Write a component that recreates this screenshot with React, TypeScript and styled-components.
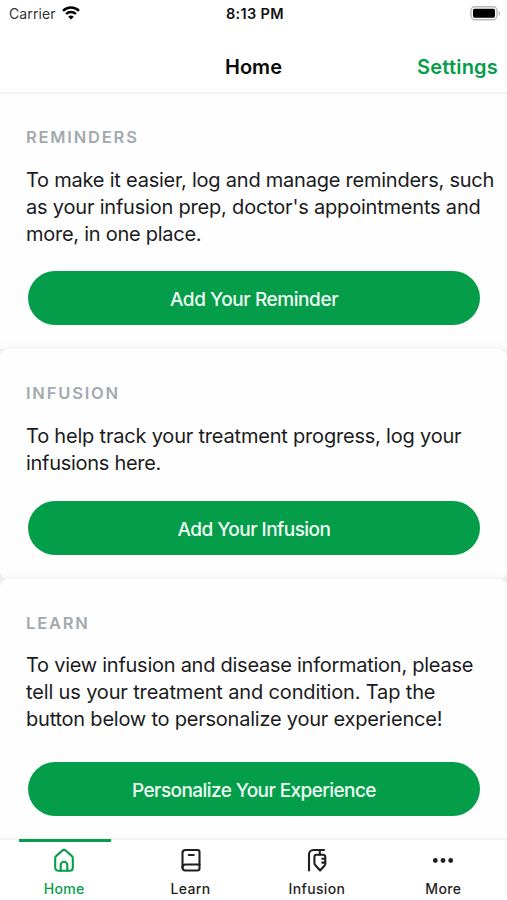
import styled, { createGlobalStyle } from "styled-components";
import { ReactNode } from "react";

const GREEN = "#049e4a";

const GlobalStyle = createGlobalStyle`
  * {
    box-sizing: border-box;
  }
  body {
    margin: 0;
    background-color: #ffffff;
    font-family: Inter, "Liberation Sans", sans-serif;
    color: #1b1b1d;
  }
  h1, h2, p {
    margin: 0;
  }
`;

const Screen = styled.div`
  width: 507px;
  height: 900px;
  display: flex;
  flex-direction: column;
  overflow: hidden;
`;

const StatusBar = styled.div`
  height: 27px;
  flex: none;
  display: grid;
  grid-template-columns: 1fr auto 1fr;
  align-items: center;
  padding: 0 6px 0 9px;
`;

const Carrier = styled.div`
  display: flex;
  align-items: center;
  gap: 6px;
  font-size: 14px;
  letter-spacing: 0.1px;
  color: #333333;
`;

const Clock = styled.div`
  font-size: 14.5px;
  font-weight: 600;
  letter-spacing: 0.35px;
  color: #111111;
`;

const Battery = styled.svg`
  justify-self: end;
`;

const Header = styled.header`
  height: 67px;
  flex: none;
  display: grid;
  grid-template-columns: 1fr auto 1fr;
  align-items: center;
  padding: 15px 9px 0;
  border-bottom: 2px solid #f3f3f3;
`;

const Title = styled.h1`
  grid-column: 2;
  font-size: 20px;
  font-weight: 600;
  line-height: 27px;
  color: #0a0a0a;
`;

const Settings = styled.a`
  justify-self: end;
  font-size: 20px;
  font-weight: 600;
  line-height: 27px;
  letter-spacing: 0.2px;
  color: ${GREEN};
`;

const Content = styled.main`
  flex: 1;
  background-color: #f2f2f2;
`;

const Card = styled.section<{ $height: number; $radius: string }>`
  height: ${(props) => props.$height}px;
  padding: 33px 0 0 26px;
  background-color: #fefefe;
  border-radius: ${(props) => props.$radius};

  & + & {
    padding-top: 34px;
    box-shadow: 0 -3px 9px rgba(0, 0, 0, 0.04);
  }
`;

const Label = styled.h2`
  font-size: 16.5px;
  font-weight: 600;
  line-height: 20px;
  letter-spacing: 1.8px;
  color: #a3a9ae;
`;

const Text = styled.p<{ $top: number; $bottom: number }>`
  margin: ${(props) => props.$top}px 0 ${(props) => props.$bottom}px;
  font-size: 20px;
  line-height: 27px;
`;

const Line = styled.span<{ $spacing: number }>`
  display: block;
  white-space: nowrap;
  letter-spacing: ${(props) => props.$spacing}px;
`;

const Button = styled.button<{ $spacing: number }>`
  display: block;
  width: 452px;
  height: 54px;
  margin-left: 2px;
  padding: 2px 0 0;
  border: none;
  border-radius: 27px;
  background-color: ${GREEN};
  font-family: inherit;
  font-size: 19px;
  font-weight: 500;
  letter-spacing: ${(props) => props.$spacing}px;
  color: #effbf3;
`;

const TabBar = styled.nav`
  height: 62px;
  flex: none;
  display: grid;
  grid-template-columns: repeat(4, 126.4px);
  padding-left: 1px;
  border-top: 2px solid #f3f3f3;
  background-color: #ffffff;
`;

const Tab = styled.div<{ $active?: boolean }>`
  position: relative;
  display: flex;
  flex-direction: column;
  align-items: center;
  padding-top: 6px;
  color: ${(props) => (props.$active ? GREEN : "#1f1f22")};

  &::before {
    content: "";
    display: ${(props) => (props.$active ? "block" : "none")};
    position: absolute;
    top: -1.5px;
    left: 17.5px;
    width: 92px;
    height: 3px;
    background-color: ${GREEN};
  }
`;

const TabName = styled.span`
  margin-top: 6px;
  font-size: 14px;
  font-weight: 500;
  line-height: 17px;
  letter-spacing: 0.35px;
`;

interface CardInterface {
  label: string;
  lines: [string, number][];
  button: string;
  spacing: number;
  height: number;
  radius: string;
  top: number;
  bottom: number;
}

const cards: CardInterface[] = [
  {
    label: "REMINDERS",
    lines: [
      ["To make it easier, log and manage reminders, such", -0.23],
      ["as your infusion prep, doctor's appointments and", -0.2],
      ["more, in one place.", -0.26],
    ],
    button: "Add Your Reminder",
    spacing: -0.42,
    height: 255,
    radius: "0",
    top: 20,
    bottom: 23,
  },
  {
    label: "INFUSION",
    lines: [
      ["To help track your treatment progress, log your", -0.2],
      ["infusions here.", -0.29],
    ],
    button: "Add Your Infusion",
    spacing: -0.53,
    height: 230,
    radius: "8px",
    top: 20,
    bottom: 24,
  },
  {
    label: "LEARN",
    lines: [
      ["To view infusion and disease information, please", -0.26],
      ["tell us your treatment and condition. Tap the", -0.15],
      ["button below to personalize your experience!", -0.22],
    ],
    button: "Personalize Your Experience",
    spacing: -0.58,
    height: 259,
    radius: "8px 8px 0 0",
    top: 19,
    bottom: 29,
  },
];

interface IconProps {
  children: ReactNode;
}

function Icon({ children }: IconProps) {
  return (
    <svg
      width="24"
      height="28"
      viewBox="0 0 24 28"
      fill="none"
      stroke="currentColor"
      strokeWidth="2.1"
      strokeLinecap="round"
      strokeLinejoin="round"
    >
      {children}
    </svg>
  );
}

function App() {
  return (
    <Screen>
      <GlobalStyle />
      <StatusBar>
        <Carrier>
          Carrier
          <svg width="18" height="15" viewBox="0 0 18 15" fill="none" stroke="#000">
            <path d="M1 4.8a11.5 11.5 0 0 1 16 0" strokeWidth="2.5" />
            <path d="M4 8a7.2 7.2 0 0 1 10 0" strokeWidth="2.3" />
            <path d="M9 13.6 6.2 10.8a4 4 0 0 1 5.6 0z" fill="#000" stroke="none" />
          </svg>
        </Carrier>
        <Clock>8:13 PM</Clock>
        <Battery width="31" height="15" viewBox="0 0 31 15">
          <rect x="1" y="0.7" width="26" height="13" rx="4" fill="#fff" stroke="#b9b9b9" strokeWidth="1.4" />
          <rect x="3" y="2.7" width="22" height="9" rx="1.6" fill="#000" />
          <path d="M28.7 5v5c1.6-.6 1.6-4.4 0-5z" fill="#b0b0b0" />
        </Battery>
      </StatusBar>
      <Header>
        <Title>Home</Title>
        <Settings>Settings</Settings>
      </Header>
      <Content>
        {cards.map((card) => (
          <Card key={card.label} $height={card.height} $radius={card.radius}>
            <Label>{card.label}</Label>
            <Text $top={card.top} $bottom={card.bottom}>
              {card.lines.map(([line, spacing]) => (
                <Line key={line} $spacing={spacing}>
                  {line}
                </Line>
              ))}
            </Text>
            <Button $spacing={card.spacing}>{card.button}</Button>
          </Card>
        ))}
      </Content>
      <TabBar>
        <Tab $active>
          <Icon>
            <path d="M3.200 12c0-.8.3-1.400.9-1.900l6-5.400a2.800 2.800 0 0 1 3.800 0l6 5.400c.6.5.9 1.100.9 1.900v9.700a3 3 0 0 1-3 3H6.200a3 3 0 0 1-3-3z" />
            <path d="M8.700 24.700v-5.700a3.300 3.300 0 0 1 6.600 0v5.700" />
          </Icon>
          <TabName>Home</TabName>
        </Tab>
        <Tab>
          <Icon>
            <path d="M6.500 4h12a2 2 0 0 1 2 2v16.500a2 2 0 0 1-2 2h-12a3 3 0 0 1-3-3V7a3 3 0 0 1 3-3z" />
            <path d="M3.500 21.500a3 3 0 0 1 3-3h14M9.800 9h5" />
          </Icon>
          <TabName>Learn</TabName>
        </Tab>
        <Tab>
          <Icon>
            <path d="M4 24.500V8.500a4.500 4.500 0 0 1 4.500-4.500H19M14.800 4v4.500" />
            <path d="M11.600 8.800h6.200a2.500 2.500 0 0 1 2.500 2.500v6.500c0 .6-.2 1-.5 1.400l-4.700 5.300-4.700-5.300c-.8-.9-1-1.800-1-2.800v-5.400a2.200 2.200 0 0 1 2.200-2.200zM17.300 12.800h3M17.300 16.600h3" />
          </Icon>
          <TabName>Infusion</TabName>
        </Tab>
        <Tab>
          <Icon>
            <g fill="currentColor" stroke="none">
              <circle cx="4.300" cy="14.500" r="2.400" />
              <circle cx="12" cy="14.500" r="2.400" />
              <circle cx="19.700" cy="14.500" r="2.400" />
            </g>
          </Icon>
          <TabName>More</TabName>
        </Tab>
      </TabBar>
    </Screen>
  );
}

export default App;
